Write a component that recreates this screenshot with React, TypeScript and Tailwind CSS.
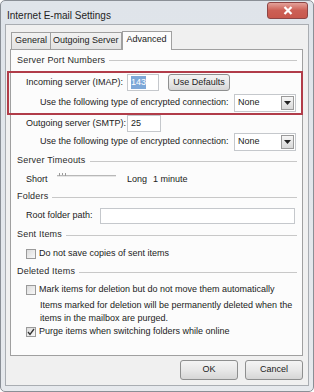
import React from "react";

const font = { fontFamily: '"Liberation Sans", Arial, sans-serif' };

function GroupHeader({ label, className }: { label: string; className: string }) {
  return (
    <div className={`flex items-center pl-[6px] pr-[5px] ${className}`}>
      <span className="text-[9px] tracking-[0.2px] text-[#2a2a2a]">{label}</span>
      <div className="ml-[4px] h-px flex-1 bg-[#c8c8c8]" />
    </div>
  );
}

function TextBox({ value, className, selected }: { value?: string; className: string; selected?: boolean }) {
  return (
    <div className={`flex items-center border border-[#c5c8cc] bg-white px-[3px] ${className}`}>
      {value ? (
        <span className={`text-[9px] ${selected ? "bg-[#7da8d8] text-white" : "text-[#222]"}`}>{value}</span>
      ) : null}
    </div>
  );
}

function Select() {
  return (
    <div className="flex h-[18px] w-[62px] items-center justify-between border border-[#c5c8cc] bg-white pl-[3px] pr-[1px]">
      <span className="text-[9px] text-[#222]">None</span>
      <div className="flex h-[14px] w-[13px] items-center justify-center border border-[#9a9a9a] bg-gradient-to-b from-[#f6f6f6] to-[#d8d8d8]">
        <svg width="7" height="4" viewBox="0 0 7 4">
          <path d="M0 0h7L3.5 4z" fill="#222" />
        </svg>
      </div>
    </div>
  );
}

function Checkbox({ checked }: { checked?: boolean }) {
  return (
    <div className="flex h-[10px] w-[10px] items-center justify-center border border-[#9a9a9a] bg-gradient-to-br from-[#dcdcdc] to-[#f8f8f8]">
      {checked ? (
        <svg width="8" height="8" viewBox="0 0 8 8">
          <path d="M1 4l2 2.5L7 1" fill="none" stroke="#333" strokeWidth="1.3" />
        </svg>
      ) : null}
    </div>
  );
}

function Button({ label, className }: { label: string; className: string }) {
  return (
    <div
      className={`flex items-center justify-center rounded-[3px] border border-[#8e8f8f] bg-gradient-to-b from-[#f4f4f4] via-[#e8e8e8] to-[#d6d6d6] text-[9px] text-[#222] ${className}`}
    >
      {label}
    </div>
  );
}

export default function App() {
  return (
    <div style={font} className="h-[392px] w-[314px] overflow-hidden bg-white">
      <div className="flex h-[392px] w-[314px] flex-col rounded-[5px] border border-[#8a8f96] bg-gradient-to-b from-[#dfe4ea] to-[#e6e9ed]">
        <div className="flex h-[23px] items-start justify-between pl-[6px] pr-[5px]">
          <span className="pt-[7px] text-[10px] text-[#1e1e1e]">Internet E-mail Settings</span>
          <div className="mt-[1px] flex h-[17px] w-[41px] items-center justify-center rounded-[3px] border border-[#8d4545] bg-gradient-to-b from-[#e3a19a] via-[#cc5f55] to-[#c8574c]">
            <svg width="10" height="9" viewBox="0 0 10 9">
              <path d="M1.5 1l7 7M8.5 1l-7 7" stroke="#fff" strokeWidth="2.2" />
            </svg>
          </div>
        </div>

        <div className="mx-[4px] mb-[5px] flex flex-1 flex-col border border-[#a9adb2] bg-[#f0f0f0] pl-[4px] pr-[5px]">
          <div className="flex h-[24px] items-end pl-[1px]">
            <div className="flex h-[17px] items-center border border-b-0 border-[#a0a0a0] bg-gradient-to-b from-[#f2f2f2] to-[#e2e2e2] px-[3px] text-[9px] text-[#222]">
              General
            </div>
            <div className="flex h-[17px] items-center border border-b-0 border-l-0 border-[#a0a0a0] bg-gradient-to-b from-[#f2f2f2] to-[#e2e2e2] px-[2px] text-[9px] text-[#222]">
              Outgoing Server
            </div>
            <div className="-mb-px relative z-10 flex h-[19px] items-center border border-b-0 border-[#a0a0a0] bg-[#fcfcfc] px-[4px] pb-[2px] text-[9px] text-[#222]">
              Advanced
            </div>
          </div>

          <div className="flex h-[307px] flex-col border border-[#a0a0a0] bg-[#fcfcfc]">
            <GroupHeader label="Server Port Numbers" className="h-[21px]" />

            <div className="relative z-10 -ml-[4px] -mr-[1px] flex h-[44px] flex-col border-2 border-[#b13c49]">
              <div className="flex h-[19px] items-center pl-[17px]">
                <span className="w-[101px] text-[9px] text-[#222]">Incoming server (IMAP):</span>
                <TextBox value="143" selected className="h-[17px] w-[32px]" />
                <Button label="Use Defaults" className="ml-[9px] h-[17px] w-[62px]" />
              </div>
              <div className="flex h-[21px] items-center pl-[31px]">
                <span className="w-[194px] text-[9px] text-[#222]">Use the following type of encrypted connection:</span>
                <Select />
              </div>
            </div>

            <div className="flex h-[17px] items-center pl-[15px]">
              <span className="w-[101px] text-[9px] text-[#222]">Outgoing server (SMTP):</span>
              <TextBox value="25" className="h-[17px] w-[34px]" />
            </div>
            <div className="flex h-[19px] items-center pl-[29px]">
              <span className="w-[194px] text-[9px] text-[#222]">Use the following type of encrypted connection:</span>
              <Select />
            </div>

            <GroupHeader label="Server Timeouts" className="h-[20px]" />
            <div className="flex h-[17px] items-center pl-[15px] text-[9px] text-[#222]">
              <span className="w-[31px]">Short</span>
              <div className="relative mb-[8px] h-[2px] w-[59px] border-t border-[#b8b8b8] bg-[#e6e6e6]">
                <div className="absolute left-[2px] top-[-3px] flex gap-[2px]">
                  <div className="h-[3px] w-px bg-[#9a9a9a]" />
                  <div className="h-[2px] w-px bg-[#9a9a9a]" />
                  <div className="h-[3px] w-px bg-[#9a9a9a]" />
                </div>
              </div>
              <span className="ml-[11px] w-[26px]">Long</span>
              <span>1 minute</span>
            </div>

            <GroupHeader label="Folders" className="h-[18px]" />
            <div className="flex h-[19px] items-center pl-[15px]">
              <span className="w-[74px] text-[9px] text-[#222]">Root folder path:</span>
              <TextBox className="h-[16px] w-[195px]" />
            </div>

            <GroupHeader label="Sent Items" className="h-[20px]" />
            <div className="flex h-[18px] items-center gap-[3px] pl-[15px] text-[9px] text-[#222]">
              <Checkbox />
              <span>Do not save copies of sent items</span>
            </div>

            <GroupHeader label="Deleted Items" className="h-[18px]" />
            <div className="flex h-[17px] items-center gap-[3px] pl-[15px] text-[9px] text-[#222]">
              <Checkbox />
              <span>Mark items for deletion but do not move them automatically</span>
            </div>
            <div className="flex h-[27px] flex-col justify-center pl-[29px] text-[9px] leading-[13px] text-[#222]">
              <span>Items marked for deletion will be permanently deleted when the</span>
              <span>items in the mailbox are purged.</span>
            </div>
            <div className="flex h-[14px] items-center gap-[3px] pl-[15px] text-[9px] text-[#222]">
              <Checkbox checked />
              <span>Purge items when switching folders while online</span>
            </div>
          </div>

          <div className="flex flex-1 items-center justify-end gap-[7px] pb-[1px]">
            <Button label="OK" className="h-[20px] w-[58px]" />
            <Button label="Cancel" className="h-[20px] w-[58px]" />
          </div>
        </div>
      </div>
    </div>
  );
}
